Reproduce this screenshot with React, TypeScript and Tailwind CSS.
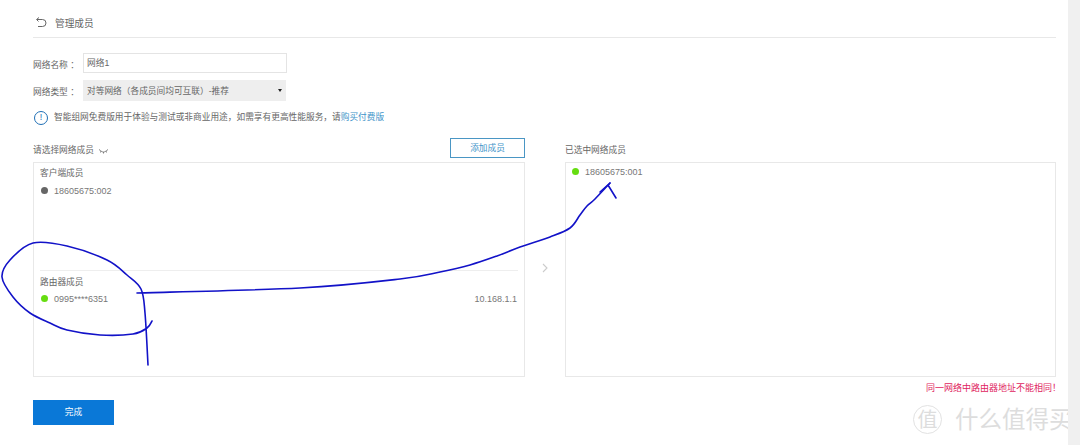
function Dot({ green }: { green?: boolean }) {
  return <span className={`mb-[2px] h-[7px] w-[7px] shrink-0 rounded-full ${green ? 'bg-[#66dd11]' : 'bg-[#666666]'}`} />
}

function Member({ name, green, ip }: { name: string; green?: boolean; ip?: string }) {
  return (
    <div className="flex items-center gap-[6px] text-[9px] leading-[12px] text-[#777777]">
      <Dot green={green} />
      <span>{name}</span>
      {ip && <span className="ml-auto mr-[1px]">{ip}</span>}
    </div>
  )
}

// turns hand-picked points into a smooth pen stroke
function smooth(pts: number[][]) {
  let d = `M${pts[0][0]} ${pts[0][1]}`
  for (let i = 0; i < pts.length - 1; i++) {
    const p0 = pts[i - 1] || pts[i]
    const p1 = pts[i]
    const p2 = pts[i + 1]
    const p3 = pts[i + 2] || p2
    const c1 = [p1[0] + (p2[0] - p0[0]) / 6, p1[1] + (p2[1] - p0[1]) / 6]
    const c2 = [p2[0] - (p3[0] - p1[0]) / 6, p2[1] - (p3[1] - p1[1]) / 6]
    d += `C${c1[0]} ${c1[1]} ${c2[0]} ${c2[1]} ${p2[0]} ${p2[1]}`
  }
  return d
}

const loop = [
  [152, 321], [147, 328], [133, 334], [100, 335], [67, 330], [50, 323], [30, 313], [13, 297],
  [2, 277], [10, 260], [33, 243], [67, 246], [107, 260], [127, 275], [141, 289], [145, 313], [148, 365],
]
const line = [
  [137, 293], [300, 288], [400, 279], [440, 272], [470, 265], [497, 256], [520, 247], [550, 237],
  [570, 228], [580, 215], [587, 206], [595, 199], [610, 183],
]

export default function App() {
  return (
    <div className="relative h-[445px] w-[1080px] overflow-hidden bg-white font-['Liberation_Sans','Noto_Sans_CJK_SC',sans-serif] text-[#666666] [text-spacing-trim:space-all]">
      <div className="pl-[33px] pr-[24px]">
        {/* Header */}
        <div className="flex h-[38px] items-center gap-[7px] border-b border-[#e8e8e8] pt-[8px]">
          <svg width="14" height="12" viewBox="0 0 14 12" fill="none" stroke="#666666" strokeWidth="1" className="ml-[1px]">
            <path d="M3 2.5h5.5a3.5 3.5 0 0 1 0 7H4" />
            <path d="M5 0.5 2.5 2.5 4.5 4.5" />
          </svg>
          <span className="mt-[3px] text-[9.7px]">管理成员</span>
        </div>

        {/* Form */}
        <div className="mt-[15px] flex items-center">
          <span className="mt-[6px] w-[50px] whitespace-nowrap text-[8.7px]">网络名称 ：</span>
          <div className="flex h-[20px] w-[204px] items-center border border-[#e4e4e4] px-[3px] pt-[2px] text-[8.7px]">网络1</div>
        </div>
        <div className="mt-[7px] flex items-center">
          <span className="mt-[5px] w-[50px] whitespace-nowrap text-[8.7px]">网络类型 ：</span>
          <div className="flex h-[21px] w-[203px] items-center justify-between bg-[#eeeeee] px-[4px] pt-[2px] text-[8.7px]">
            <span>对等网络（各成员间均可互联）-推荐</span>
            <span className="mb-[2px] h-0 w-0 border-x-[2.5px] border-t-[3px] border-x-transparent border-t-[#222222]" />
          </div>
        </div>
        <div className="mt-[10px] flex items-center gap-[6px] pl-[1px] text-[8.7px]">
          <span className="flex h-[14px] w-[14px] items-center justify-center rounded-full border border-[#1f6fb5] text-[9px] text-[#1f6fb5]">!</span>
          <span>
            智能组网免费版用于体验与测试或非商业用途，如需享有更高性能服务，请<span className="text-[#3f94c9]">购买付费版</span>
          </span>
        </div>

        {/* Member panels */}
        <div className="mt-[13px] flex items-start">
          <div className="w-[492px]">
            <div className="flex h-[24px] items-start justify-between">
              <span className="mt-[6px] flex items-center gap-[4px] text-[8.7px]">
                请选择网络成员
                <svg width="11" height="6" viewBox="0 0 11 6" fill="none" stroke="#666666" strokeWidth="0.8">
                  <path d="M1 1.5c2 1.5 3 2.5 4.5 2.5S8 3 10 1.5M3 3 2.5 4.5M5.5 4v1.5M8 3l.5 1.5" />
                </svg>
              </span>
              <button className="h-[20px] w-[75px] border border-[#4a96c4] pt-[2px] text-[8.7px] text-[#3f94c9]">添加成员</button>
            </div>
            <div className="flex h-[215px] flex-col border border-[#e8e8e8] px-[6px]">
              <div className="h-[107px]">
                <div className="mt-[4px] text-[8.7px] leading-[12px]">客户端成员</div>
                <div className="mt-[6px] pl-[1px]"><Member name="18605675:002" /></div>
              </div>
              <div className="border-t border-[#eeeeee] pt-[5px]">
                <div className="text-[8.7px] leading-[12px]">路由器成员</div>
                <div className="mt-[5px] pl-[1px]"><Member name="0995****6351" green ip="10.168.1.1" /></div>
              </div>
            </div>
          </div>
          <div className="flex w-[40px] justify-center pt-[125px]">
            <svg width="6" height="10" viewBox="0 0 6 10" fill="none" stroke="#cccccc" strokeWidth="1.1">
              <path d="M1 1l4 4-4 4" />
            </svg>
          </div>
          <div className="w-[491px]">
            <div className="flex h-[24px] items-start text-[8.7px]">
              <span className="mt-[6px]">已选中网络成员</span>
            </div>
            <div className="h-[215px] border border-[#e8e8e8] px-[6px] pt-[3px]">
              <Member name="18605675:001" green />
            </div>
          </div>
        </div>
        <div className="mt-[5px] whitespace-nowrap pl-[893px] text-[9px] text-[#e0245e]">同一网络中路由器地址不能相同！</div>
        <button className="mt-[4px] h-[25px] w-[81px] bg-[#0a78d7] pt-[1px] text-[8.7px] text-white">完成</button>
      </div>

      {/* Hand-drawn annotation */}
      <svg className="absolute inset-0" width="1080" height="445" fill="none" stroke="#1212c8" strokeWidth="1.6" strokeLinecap="round" strokeLinejoin="round">
        <path d={smooth(loop)} />
        <path d={smooth(line)} />
        <path d="M600 192 610 183 608 185 616 198" />
      </svg>

      {/* Watermark */}
      <div className="absolute bottom-[11px] left-[913px] flex items-center gap-[13px] whitespace-nowrap text-[23.5px] leading-[28px] text-[#dddddd]">
        <span className="flex h-[29px] w-[29px] items-center justify-center rounded-full border border-[#e2e2e2] text-[20px]">值</span>
        <span>什么值得买</span>
      </div>
      <div className="absolute inset-y-0 right-0 w-[12px] bg-[#f0f0f0]" />
    </div>
  )
}
